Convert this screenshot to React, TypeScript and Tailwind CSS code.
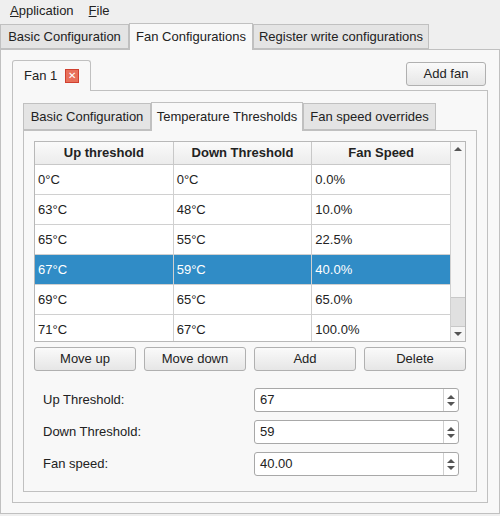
import React from "react";

const rows = [
  ["0°C", "0°C", "0.0%"],
  ["63°C", "48°C", "10.0%"],
  ["65°C", "55°C", "22.5%"],
  ["67°C", "59°C", "40.0%"],
  ["69°C", "65°C", "65.0%"],
  ["71°C", "67°C", "100.0%"],
];

const Btn = ({ children, w }: { children: React.ReactNode; w: string }) => (
  <div className={`${w} h-[24px] flex items-center justify-center rounded-[3px] border border-[#b0b0b0] bg-gradient-to-b from-[#fafafa] to-[#e6e6e6] text-[13px] text-[#222] whitespace-nowrap`}>
    {children}
  </div>
);

const Spin = ({ v }: { v: string }) => (
  <div className="w-[205px] h-[24px] flex items-center rounded-[3px] border border-[#a8a8a8] bg-white">
    <div className="flex-1 pl-[5px] text-[13px] text-[#222]">{v}</div>
    <div className="w-[15px] h-full border-l border-[#d0d0d0] flex flex-col items-center justify-center gap-[3px]">
      <div className="w-0 h-0 border-l-[4px] border-r-[4px] border-b-[4px] border-l-transparent border-r-transparent border-b-[#555]" />
      <div className="w-0 h-0 border-l-[4px] border-r-[4px] border-t-[4px] border-l-transparent border-r-transparent border-t-[#555]" />
    </div>
  </div>
);

export default function App() {
  return (
    <div className="w-[500px] h-[516px] bg-[#efefef] text-[13px] text-[#222] flex flex-col whitespace-nowrap" style={{ fontFamily: '"Liberation Sans", Arial, sans-serif' }}>
      <div className="h-[22px] flex items-center gap-[15px] px-[10px] text-[13px]">
        <span><u>A</u>pplication</span>
        <span><u>F</u>ile</span>
      </div>
      <div className="flex h-[27px] items-end pl-0">
        <div className="w-[129px] h-[25px] border border-[#c0c0c0] bg-[#e4e4e4] flex items-center justify-center">Basic Configuration</div>
        <div className="w-[124px] h-[27px] border border-b-0 border-[#c0c0c0] bg-[#f8f8f8] flex items-center justify-center -mb-px relative z-10">Fan Configurations</div>
        <div className="w-[176px] h-[25px] border border-[#c0c0c0] bg-[#e4e4e4] flex items-center justify-center">Register write configurations</div>
      </div>
      <div className="flex-1 mx-0 mb-[2px] border border-[#c0c0c0] bg-[#f8f8f8] flex flex-col px-[11px] pt-[10px] pb-[10px]">
        <div className="flex items-end justify-between">
          <div className="w-[79px] h-[31px] border border-b-0 border-[#c0c0c0] rounded-t-[3px] bg-[#f8f8f8] flex items-center pl-[11px] gap-[8px] -mb-px relative z-10">
            <span>Fan 1</span>
            <span className="w-[14px] h-[14px] bg-[#e8705a] border border-[#d04030] flex items-center justify-center text-white text-[10px] leading-none">✕</span>
          </div>
          <div className="mb-[4px] mr-[2px]"><Btn w="w-[80px]">Add fan</Btn></div>
        </div>
        <div className="flex-1 border border-[#c0c0c0] flex flex-col px-[10px] pt-[10px] pb-[10px]">
          <div className="flex items-end h-[29px]">
            <div className="w-[128px] h-[27px] border border-[#c0c0c0] bg-[#e4e4e4] flex items-center justify-center">Basic Configuration</div>
            <div className="w-[152px] h-[29px] border border-b-0 border-[#c0c0c0] bg-[#f8f8f8] flex items-center justify-center -mb-px relative z-10">Temperature Thresholds</div>
            <div className="w-[133px] h-[27px] border border-[#c0c0c0] bg-[#e4e4e4] flex items-center justify-center">Fan speed overrides</div>
          </div>
          <div className="flex-1 border border-[#c0c0c0] flex flex-col px-[10px] pt-[10px]">
            <div className="h-[201px] border border-[#b8b8b8] bg-white flex overflow-hidden">
              <div className="flex-1 flex flex-col">
                <div className="h-[23px] shrink-0 flex font-bold bg-gradient-to-b from-[#fafafa] to-[#ececec] border-b border-[#c8c8c8]">
                  {["Up threshold", "Down Threshold", "Fan Speed"].map((h, i) => (
                    <div key={h} className={`flex-1 flex items-center justify-center ${i < 2 ? "border-r border-[#c8c8c8]" : ""}`}>{h}</div>
                  ))}
                </div>
                {rows.map((r, ri) => (
                  <div key={ri} className={`h-[30px] shrink-0 flex border-b border-[#d0d0d0] ${ri === 3 ? "bg-[#308cc6] text-white" : ""}`}>
                    {r.map((c, i) => (
                      <div key={i} className={`flex-1 flex items-center pl-[3px] ${i < 2 ? "border-r border-[#d0d0d0]" : ""}`}>{c}</div>
                    ))}
                  </div>
                ))}
              </div>
              <div className="w-[15px] border-l border-[#d0d0d0] bg-[#f6f6f6] flex flex-col items-center">
                <div className="h-[14px] flex items-center"><div className="w-0 h-0 border-l-[4px] border-r-[4px] border-b-[4px] border-l-transparent border-r-transparent border-b-[#555]" /></div>
                <div className="flex-1 w-full flex flex-col justify-end"><div className="h-[30px] bg-[#e0e0e0] border-y border-[#c8c8c8]" /></div>
                <div className="h-[14px] flex items-center"><div className="w-0 h-0 border-l-[4px] border-r-[4px] border-t-[4px] border-l-transparent border-r-transparent border-t-[#555]" /></div>
              </div>
            </div>
            <div className="flex gap-[8px] mt-[5px]">
              <Btn w="w-[103px]">Move up</Btn>
              <Btn w="w-[103px]">Move down</Btn>
              <Btn w="w-[103px]">Add</Btn>
              <Btn w="w-[103px]">Delete</Btn>
            </div>
            <div className="flex flex-col gap-[8px] mt-[17px] pl-[9px]">
              {[["Up Threshold:", "67"], ["Down Threshold:", "59"], ["Fan speed:", "40.00"]].map(([l, v]) => (
                <div key={l} className="flex items-center">
                  <div className="w-[211px]">{l}</div>
                  <Spin v={v} />
                </div>
              ))}
            </div>
          </div>
        </div>
      </div>
    </div>
  );
}
